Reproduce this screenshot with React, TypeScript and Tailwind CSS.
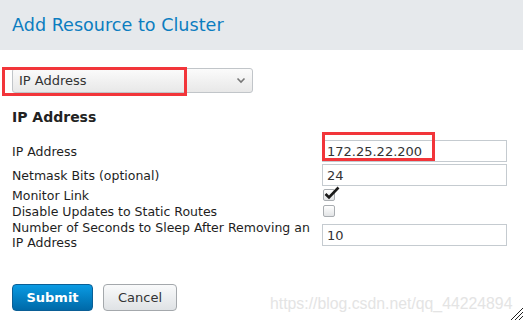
import React from "react";

const font = { fontFamily: '"DejaVu Sans", Verdana, sans-serif' };

function Checkbox({ checked }: { checked?: boolean }) {
  return (
    <div className="relative w-[12px] h-[12px] rounded-[2px] border border-[#a9adb1] bg-gradient-to-b from-[#ffffff] to-[#e2e4e6]">
      {checked && (
        <svg
          className="absolute -top-[4px] left-[0px]"
          width="16"
          height="14"
          viewBox="0 0 16 14"
        >
          <path d="M1.5 8 L5 11.5 L14.5 1.5" fill="none" stroke="#1b1b1b" strokeWidth="2.6" />
        </svg>
      )}
    </div>
  );
}

function TextInput({ value }: { value: string }) {
  return (
    <div className="w-[185px] h-[22px] border border-[#c5cbd0] bg-white flex items-center pl-[4px] text-[13px] text-[#333]">
      {value}
    </div>
  );
}

export default function App() {
  return (
    <div className="relative w-[523px] h-[320px] bg-white overflow-hidden text-[#1e1e1e]" style={font}>
      <div className="h-[50px] bg-[#e6e9ec] flex items-center px-[12px]">
        <h1 className="text-[17.6px] text-[#0c7dc0]">Add Resource to Cluster</h1>
      </div>

      <div className="px-[12px]">
        <div className="mt-[18px] w-[241px] h-[25px] border border-[#c1c5c9] rounded-[3px] bg-gradient-to-b from-[#fbfbfb] to-[#e8e8e8] flex items-center justify-between pl-[6px] pr-[6px] text-[13px] text-[#333]">
          <span>IP Address</span>
          <svg width="10" height="7" viewBox="0 0 10 7">
            <path d="M1.5 1.5 L5 5 L8.5 1.5" fill="none" stroke="#777" strokeWidth="1.6" />
          </svg>
        </div>

        <h2 className="mt-[15px] text-[14px] font-bold text-[#222] leading-[18px]">IP Address</h2>

        <div className="mt-[13px] grid grid-cols-[310px_185px] text-[12.5px] leading-[15px]">
          <div className="h-[24px] flex items-center">IP Address</div>
          <div className="h-[24px] flex items-center">
            <TextInput value="172.25.22.200" />
          </div>
          <div className="h-[24px] flex items-center">Netmask Bits (optional)</div>
          <div className="h-[24px] flex items-center">
            <TextInput value="24" />
          </div>
          <div className="h-[16px] flex items-center">Monitor Link</div>
          <div className="h-[16px] flex items-center pl-[1px]">
            <Checkbox checked />
          </div>
          <div className="h-[16px] flex items-center">Disable Updates to Static Routes</div>
          <div className="h-[16px] flex items-center pl-[1px]">
            <Checkbox />
          </div>
          <div className="h-[32px] flex items-center">Number of Seconds to Sleep After Removing an IP Address</div>
          <div className="h-[32px] flex items-center">
            <TextInput value="10" />
          </div>
        </div>

        <div className="mt-[33px] flex gap-[10px]">
          <button className="w-[81px] h-[27px] rounded-[4px] border border-[#0a5f96] bg-gradient-to-b from-[#0b9be3] to-[#0069a8] text-white font-bold text-[13px]">
            Submit
          </button>
          <button className="w-[74px] h-[27px] rounded-[4px] border border-[#a4a8ac] bg-gradient-to-b from-[#f9fafb] to-[#dfe2e5] text-[#333] text-[13px]">
            Cancel
          </button>
        </div>
      </div>

      {/* annotations */}
      <div className="absolute left-[2px] top-[67px] w-[185px] h-[29px] border-[3px] border-[#f2353a]" />
      <div className="absolute left-[322px] top-[132px] w-[113px] h-[29px] border-[3px] border-[#f2353a]" />

      <div
        className="absolute left-[270px] top-[292px] text-[15.8px] text-[#e4e4e4]"
        style={{ fontFamily: '"Liberation Sans", Arial, sans-serif' }}
      >
        https://blog.csdn.net/qq_44224894
      </div>
      <svg className="absolute right-0 bottom-0" width="12" height="12" viewBox="0 0 12 12">
        <path d="M0 12 L12 0 M4 12 L12 4 M8 12 L12 8" stroke="#222" strokeWidth="1" />
      </svg>
    </div>
  );
}
